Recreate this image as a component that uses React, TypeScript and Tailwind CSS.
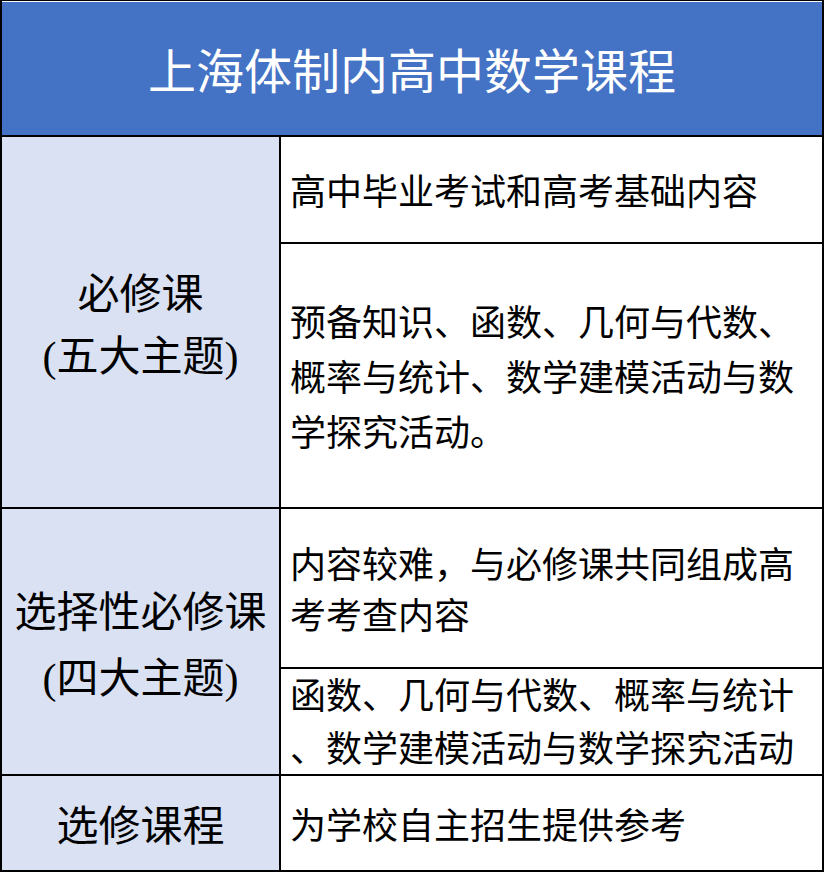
const font = {
  fontFamily: '"Liberation Serif", "Noto Sans CJK SC", serif',
};

function LeftCell({ lines, leading = "leading-[63px]" }: { lines: string[]; leading?: string }) {
  return (
    <div className={`w-[279px] shrink-0 border-r-2 border-black bg-[#d9e1f2] flex flex-col items-center justify-center pt-[8px] text-[42px] text-black ${leading}`}>
      {lines.map((l) => (
        <div key={l} className="whitespace-nowrap">{l}</div>
      ))}
    </div>
  );
}

function RightCell({ lines, className }: { lines: string[]; className: string }) {
  return (
    <div className={`flex flex-col justify-center pl-[9px] text-[36px] text-black bg-white ${className}`}>
      {lines.map((l) => (
        <div key={l} className="whitespace-nowrap">{l}</div>
      ))}
    </div>
  );
}

export default function App() {
  return (
    <div className="w-[824px] h-[872px] flex flex-col border-t border-l-2 border-r-2 border-b-2 border-black overflow-hidden" style={font}>
      <header className="h-[134px] shrink-0 border-t border-white bg-[#4472c4] flex items-center justify-center pt-[8px]">
        <h1 className="text-[48px] font-normal text-white">上海体制内高中数学课程</h1>
      </header>

      <section className="h-[372px] shrink-0 border-t-2 border-black flex">
        <LeftCell lines={["必修课", "(五大主题)"]} leading="leading-[62px]" />
        <div className="flex-1 flex flex-col">
          <RightCell
            lines={["高中毕业考试和高考基础内容"]}
            className="h-[107px] shrink-0 border-b-2 border-black pt-[8px] leading-[55px]"
          />
          <RightCell
            lines={["预备知识、函数、几何与代数、", "概率与统计、数学建模活动与数", "学探究活动。"]}
            className="flex-1 pt-[8px] leading-[55px]"
          />
        </div>
      </section>

      <section className="h-[267px] shrink-0 border-t-2 border-black flex">
        <LeftCell lines={["选择性必修课", "(四大主题)"]} leading="leading-[66px]" />
        <div className="flex-1 flex flex-col">
          <RightCell
            lines={["内容较难，与必修课共同组成高", "考考查内容"]}
            className="h-[160px] shrink-0 border-b-2 border-black pt-[8px] leading-[51px]"
          />
          <RightCell
            lines={["函数、几何与代数、概率与统计", "、数学建模活动与数学探究活动"]}
            className="flex-1 pt-[2px] leading-[53px]"
          />
        </div>
      </section>

      <section className="flex-1 border-t-2 border-black flex">
        <LeftCell lines={["选修课程"]} />
        <RightCell lines={["为学校自主招生提供参考"]} className="flex-1 pt-[8px] leading-[55px]" />
      </section>
    </div>
  );
}
